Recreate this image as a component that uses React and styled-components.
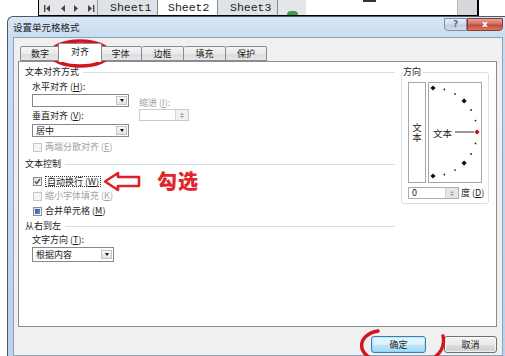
import React from 'react'
import styled, { createGlobalStyle } from 'styled-components'

const GlobalStyle = createGlobalStyle`
  html, body { margin: 0; padding: 0; background: #fff; }
  body { width: 505px; height: 356px; overflow: hidden; }
`

const Page = styled.div`
  position: relative;
  width: 505px;
  height: 356px;
  overflow: hidden;
  background: #fff;
  font-family: "Noto Sans CJK SC", "Noto Sans", sans-serif;
  font-size: 9px;
  line-height: 12px;
  color: #1b1b1b;
`

/* excel sheet bar behind the dialog */
const SheetStrip = styled.div`
  height: 16px;
  display: flex;
`
const SheetBar = styled.div`
  margin-left: 38px;
  width: 438px;
  height: 15px;
  display: flex;
  background: #e4e6e9;
  border-left: 1px solid #000;
  border-right: 2px solid #000;
  border-bottom: 1px solid #000;
`
const NavArrows = styled.div`
  width: 58px;
  display: flex;
  align-items: center;
  border-right: 1px solid #9a9a9a;
`
const SheetTab = styled.div`
  width: 60px;
  box-sizing: border-box;
  display: flex;
  align-items: center;
  padding-left: ${p => (p.$active ? 10 : 12)}px;
  font-family: "Liberation Mono", monospace;
  font-size: 11.5px;
  color: #222;
  background: ${p => (p.$active ? '#fff' : '#dfe3e8')};
  border-right: 1px solid #8a8a8a;
`
const Filler = styled.div`
  width: 28px;
  display: flex;
  align-items: flex-end;
  justify-content: center;
`
const GreenDot = styled.div`
  width: 11px;
  height: 4px;
  border-radius: 6px 6px 0 0;
  background: #3f9a45;
`
const SheetBlank = styled.div`
  flex: 1;
  background: #fff;
  display: flex;
  justify-content: space-between;
`
const Mark = styled.div`
  margin-left: 57px;
  width: 13px;
  height: 2px;
  background: #333;
`
const ScrollStub = styled.div`
  width: 19px;
  background: #d6d8db;
  border-left: 1px solid #b8b8b8;
`

/* dialog frame */
const Dialog = styled.div`
  margin-left: 7px;
  width: 498px;
  height: 340px;
  box-sizing: border-box;
  border-left: 1px solid #4f5a68;
  border-top: 1px solid #4f5a68;
  border-top-left-radius: 6px;
  background: linear-gradient(180deg, #d9e6f5 0, #cadcf0 20px, #bcd2eb 100%);
  padding: 0 2px 0 5px;
  display: flex;
  flex-direction: column;
`
const TitleRow = styled.div`
  height: 20px;
  display: flex;
  justify-content: space-between;
`
const Title = styled.div`
  font-size: 9.5px;
  line-height: 20px;
  color: #1e1e1e;
`
const CaptionButtons = styled.div`
  display: flex;
  margin-top: 1px;
  height: 13px;
`
const CapBtn = styled.div`
  width: ${p => p.$w}px;
  box-sizing: border-box;
  display: flex;
  align-items: center;
  justify-content: center;
  border: 1px solid ${p => (p.$close ? '#8c3a30' : '#7d8fa6')};
  border-radius: ${p => (p.$close ? '0 0 4px 0' : '0 0 0 4px')};
  background: ${p =>
    p.$close
      ? 'linear-gradient(180deg, #e3a59a 0, #d36e5f 45%, #c24a37 55%, #d87a62 100%)'
      : 'linear-gradient(180deg, #e8eef6 0, #d2dcea 45%, #c0cde0 55%, #d3deeb 100%)'};
  color: ${p => (p.$close ? '#fff' : '#5b6c86')};
  font-family: "DejaVu Sans", sans-serif;
  font-weight: bold;
  font-size: 9px;
  line-height: 9px;
`

const Client = styled.div`
  flex: 1;
  border: 1px solid #8ea1b8;
  background: #f0f0f0;
  padding: 6px 5px 0 4px;
  display: flex;
  flex-direction: column;
`
const TabStrip = styled.div`
  height: 18px;
  display: flex;
  align-items: flex-end;
  padding-left: 2px;
  margin-bottom: -1px;
  position: relative;
  z-index: 1;
`
const Tab = styled.div`
  width: ${p => p.$w}px;
  height: ${p => (p.$active ? 19 : 15)}px;
  box-sizing: border-box;
  margin: ${p => (p.$active ? '0 -2px' : '0 0 1px')};
  display: flex;
  align-items: center;
  justify-content: center;
  border: 1px solid #898c95;
  border-bottom: ${p => (p.$active ? 'none' : '1px solid #898c95')};
  border-left: ${p => (p.$first || p.$active ? '1px solid #898c95' : 'none')};
  border-radius: 2px 2px 0 0;
  background: ${p => (p.$active ? '#fff' : 'linear-gradient(180deg, #f3f3f3 0, #ebebeb 50%, #dcdcdc 51%, #e6e6e6 100%)')};
  position: relative;
  z-index: ${p => (p.$active ? 2 : 0)};
  padding-bottom: ${p => (p.$active ? 2 : 0)}px;
`
const Pane = styled.div`
  height: 266px;
  box-sizing: border-box;
  background: #fff;
  border: 1px solid #898c95;
  padding: 4px 7px 0 6px;
  display: flex;
  gap: 6px;
`
const LeftCol = styled.div`
  width: 370px;
  display: flex;
  flex-direction: column;
`
const GroupTitle = styled.div`
  height: 12px;
  margin-top: ${p => p.$mt || 0}px;
  display: flex;
  align-items: center;
  &::after {
    content: '';
    flex: 1;
    height: 1px;
    margin-left: 4px;
    background: #d5dfe5;
  }
`
const FieldLabel = styled.div`
  height: 12px;
  margin-top: ${p => p.$mt || 0}px;
  padding-left: ${p => (p.$indent ? 7 : 0)}px;
  color: ${p => (p.$disabled ? '#a3a3a3' : '#1b1b1b')};
  white-space: nowrap;
`
const AlignGrid = styled.div`
  margin-top: 3px;
  padding-left: 7px;
  display: flex;
  gap: 10px;
`
const Col = styled.div`
  display: flex;
  flex-direction: column;
  padding-top: ${p => p.$pt || 0}px;
`
const Select = styled.div`
  width: ${p => p.$w}px;
  height: ${p => p.$h || 13}px;
  margin-top: ${p => p.$mt || 0}px;
  margin-left: ${p => p.$ml || 0}px;
  box-sizing: border-box;
  border: 1px solid #828790;
  background: #fff;
  display: flex;
  align-items: center;
`
const SelectText = styled.span`
  flex: 1;
  padding-left: 3px;
`
const SelectBtn = styled.span`
  width: 11px;
  height: 9px;
  margin-right: 1px;
  box-sizing: border-box;
  border: 1px solid #c3c3c3;
  background: linear-gradient(180deg, #fafafa, #e2e2e2);
  display: flex;
  align-items: center;
  justify-content: center;
  &::after {
    content: '';
    border-left: 2.5px solid transparent;
    border-right: 2.5px solid transparent;
    border-top: 3px solid #111;
  }
`
const Spinner = styled.div`
  width: ${p => p.$w}px;
  height: 12px;
  flex: none;
  box-sizing: border-box;
  border: 1px solid ${p => (p.$disabled ? '#c9cbd0' : '#abadb3')};
  background: #fff;
  display: flex;
  align-items: center;
`
const SpinText = styled.span`
  flex: 1;
  padding-left: 3px;
`
const SpinBtns = styled.span`
  width: 12px;
  height: 100%;
  background: ${p => (p.$disabled ? '#f1f1f1' : '#e4e6ea')};
  border-left: 1px solid #d3d5d9;
  display: flex;
  flex-direction: column;
  align-items: center;
  justify-content: center;
  gap: 1px;
  &::before, &::after {
    content: '';
    border-left: 2px solid transparent;
    border-right: 2px solid transparent;
  }
  &::before { border-bottom: 2px solid #9aa0aa; }
  &::after { border-top: 2px solid #9aa0aa; }
`
const CheckRow = styled.div`
  position: relative;
  height: 12px;
  margin-top: ${p => p.$mt || 0}px;
  padding-left: 8px;
  display: flex;
  align-items: center;
  gap: 3px;
  color: ${p => (p.$disabled ? '#a3a3a3' : '#1b1b1b')};
  white-space: nowrap;
`
const Box = styled.span`
  width: 9px;
  height: 9px;
  box-sizing: border-box;
  flex: none;
  border: 1px solid ${p => (p.$disabled ? '#c8c8c8' : '#8e8f8f')};
  background: ${p => (p.$disabled ? '#f4f4f4' : 'linear-gradient(135deg, #dedede, #fbfbfb)')};
  display: flex;
  align-items: center;
  justify-content: center;
`
const Fill = styled.span`
  width: 5px;
  height: 5px;
  background: linear-gradient(135deg, #2a5ea8, #5c93d6);
`
const Focus = styled.span`
  border: 1px dotted #333;
  padding: 0 1px;
  line-height: 9px;
`
const Note = styled.div`
  position: absolute;
  left: 78px;
  top: -5px;
  display: flex;
  align-items: center;
  gap: 16px;
`
const NoteText = styled.span`
  font-size: 20px;
  line-height: 22px;
  font-weight: 900;
  color: #e0262c;
  letter-spacing: 1px;
`

/* 方向 */
const Fieldset = styled.fieldset`
  margin: 0;
  width: 88px;
  height: 138px;
  box-sizing: border-box;
  padding: 4px 0 0 6px;
  border: 1px solid #d5dfe5;
  border-radius: 3px;
  min-width: 0;
`
const Legend = styled.legend`
  padding: 0 2px 0 0;
  margin-left: -5px;
  line-height: 12px;
`
const DialRow = styled.div`
  display: flex;
  gap: 2px;
`
const VerticalBox = styled.div`
  width: 18px;
  height: 101px;
  box-sizing: border-box;
  border: 1px solid #a7a7a7;
  display: flex;
  align-items: center;
  justify-content: center;
`
const VText = styled.span`
  writing-mode: vertical-rl;
  font-size: 9.5px;
  line-height: 10px;
`
const DialBox = styled.div`
  position: relative;
  width: 54px;
  height: 101px;
  box-sizing: border-box;
  border: 1px solid #a7a7a7;
  display: flex;
  align-items: center;
  padding-left: 4px;
  font-size: 9.5px;
`
const DialSvg = styled.svg`
  position: absolute;
  left: 0;
  top: 0;
`
const DialLabel = styled.span`
  position: relative;
`
const DegreeRow = styled.div`
  margin-top: 4px;
  display: flex;
  align-items: center;
  gap: 2px;
  white-space: nowrap;
`

const Footer = styled.div`
  margin-top: 9px;
  display: flex;
  justify-content: flex-end;
  gap: 18px;
`
const Button = styled.div`
  width: ${p => p.$w}px;
  height: 17px;
  box-sizing: border-box;
  border: 1px solid ${p => (p.$default ? '#3c7fb1' : '#707070')};
  border-radius: 3px;
  background: ${p =>
    p.$default
      ? 'linear-gradient(180deg, #eaf6fd 0, #d9f0fc 50%, #bee6fd 51%, #a7d9f5 100%)'
      : 'linear-gradient(180deg, #f2f2f2 0, #ebebeb 50%, #dddddd 51%, #cfcfcf 100%)'};
  box-shadow: inset 0 0 0 1px ${p => (p.$default ? '#48d6fb55' : '#ffffffaa')};
  display: flex;
  align-items: center;
  justify-content: center;
`

const Markup = styled.svg`
  position: absolute;
  left: 0;
  top: 0;
  pointer-events: none;
`

const tabs = [
  { label: '数字', w: 40 },
  { label: '对齐', w: 44, active: true },
  { label: '字体', w: 42 },
  { label: '边框', w: 42 },
  { label: '填充', w: 42 },
  { label: '保护', w: 41 },
]

function Dial() {
  const cx = 4, cy = 49, r = 44
  const marks = []
  for (let a = 90; a >= -90; a -= 15) {
    const rad = (a * Math.PI) / 180
    const x = cx + r * Math.cos(rad)
    const y = cy - r * Math.sin(rad)
    if (a % 45 === 0) {
      const s = 2.6
      marks.push(
        <polygon key={a} points={`${x},${y - s} ${x + s},${y} ${x},${y + s} ${x - s},${y}`} fill={a === 0 ? '#b3121b' : '#111'} />
      )
    } else {
      marks.push(<circle key={a} cx={x} cy={y} r={0.9} fill="#222" />)
    }
  }
  return (
    <DialSvg width="52" height="99" viewBox="0 0 52 99">
      <line x1="26" y1={cy} x2="45" y2={cy} stroke="#333" strokeWidth="1" />
      {marks}
    </DialSvg>
  )
}

export default function App() {
  return (
    <Page>
      <GlobalStyle />
      <SheetStrip>
        <SheetBar>
          <NavArrows>
            <svg width="58" height="14" viewBox="0 0 58 14">
              <rect x="5" y="4" width="1.4" height="7" fill="#444" />
              <polygon points="11,4 7,7.5 11,11" fill="#444" />
              <polygon points="26,4 22,7.5 26,11" fill="#444" />
              <polygon points="35,4 39,7.5 35,11" fill="#444" />
              <polygon points="49,4 53,7.5 49,11" fill="#444" />
              <rect x="54" y="4" width="1.4" height="7" fill="#444" />
            </svg>
          </NavArrows>
          <SheetTab>Sheet1</SheetTab>
          <SheetTab $active>Sheet2</SheetTab>
          <SheetTab>Sheet3</SheetTab>
          <Filler>
            <GreenDot />
          </Filler>
          <SheetBlank>
            <Mark />
            <ScrollStub />
          </SheetBlank>
        </SheetBar>
      </SheetStrip>

      <Dialog>
        <TitleRow>
          <Title>设置单元格格式</Title>
          <CaptionButtons>
            <CapBtn $w={23}>?</CapBtn>
            <CapBtn $w={36} $close>x</CapBtn>
          </CaptionButtons>
        </TitleRow>
        <Client>
          <TabStrip>
            {tabs.map((t, i) => (
              <Tab key={t.label} $w={t.w} $active={t.active} $first={i === 0}>
                {t.label}
              </Tab>
            ))}
          </TabStrip>
          <Pane>
            <LeftCol>
              <GroupTitle>文本对齐方式</GroupTitle>
              <AlignGrid>
                <Col>
                  <FieldLabel>水平对齐 (<u>H</u>):</FieldLabel>
                  <Select $w={97} $mt={1}>
                    <SelectText />
                    <SelectBtn />
                  </Select>
                  <FieldLabel $mt={3}>垂直对齐 (<u>V</u>):</FieldLabel>
                  <Select $w={97} $mt={2}>
                    <SelectText>居中</SelectText>
                    <SelectBtn />
                  </Select>
                </Col>
                <Col $pt={16}>
                  <FieldLabel $disabled>缩进 (<u>I</u>):</FieldLabel>
                  <Spinner $w={50} $disabled>
                    <SpinText />
                    <SpinBtns $disabled />
                  </Spinner>
                </Col>
              </AlignGrid>
              <CheckRow $mt={4} $disabled>
                <Box $disabled />
                <span>两端分散对齐 (<u>E</u>)</span>
              </CheckRow>

              <GroupTitle $mt={5}>文本控制</GroupTitle>
              <CheckRow $mt={5}>
                <Box>
                  <svg width="7" height="7" viewBox="0 0 7 7">
                    <path d="M1 3.6 L2.8 5.4 L6 1.2" fill="none" stroke="#3b4a66" strokeWidth="1.4" />
                  </svg>
                </Box>
                <Focus>自动换行 (<u>W</u>)</Focus>
                <Note>
                  <svg width="38" height="21" viewBox="0 0 38 21">
                    <path d="M2 10.5 L15 2 L15 6 L36 6 L36 15 L15 15 L15 19 Z" fill="#fff" stroke="#dd2229" strokeWidth="2.6" strokeLinejoin="round" />
                  </svg>
                  <NoteText>勾选</NoteText>
                </Note>
              </CheckRow>
              <CheckRow $mt={3} $disabled>
                <Box $disabled />
                <span>缩小字体填充 (<u>K</u>)</span>
              </CheckRow>
              <CheckRow $mt={3}>
                <Box>
                  <Fill />
                </Box>
                <span>合并单元格 (<u>M</u>)</span>
              </CheckRow>

              <GroupTitle $mt={3}>从右到左</GroupTitle>
              <FieldLabel $mt={2} $indent>文字方向 (<u>T</u>):</FieldLabel>
              <Select $w={82} $h={15} $mt={1} $ml={7}>
                <SelectText>根据内容</SelectText>
                <SelectBtn />
              </Select>
            </LeftCol>

            <Fieldset>
              <Legend>方向</Legend>
              <DialRow>
                <VerticalBox>
                  <VText>文本</VText>
                </VerticalBox>
                <DialBox>
                  <Dial />
                  <DialLabel>文本</DialLabel>
                </DialBox>
              </DialRow>
              <DegreeRow>
                <Spinner $w={51}>
                  <SpinText>0</SpinText>
                  <SpinBtns />
                </Spinner>
                <span>度 (<u>D</u>)</span>
              </DegreeRow>
            </Fieldset>
          </Pane>
          <Footer>
            <Button $w={55} $default>确定</Button>
            <Button $w={53}>取消</Button>
          </Footer>
        </Client>
      </Dialog>

      <Markup width="505" height="356" viewBox="0 0 505 356">
        <ellipse cx="80" cy="53.5" rx="29.5" ry="12.5" fill="none" stroke="#d4151c" strokeWidth="3.4" />
        <path d="M378 331 C358 334, 352 356, 385 364 C415 370, 448 360, 443 336" fill="none" stroke="#d4151c" strokeWidth="3.4" strokeLinecap="round" />
      </Markup>
    </Page>
  )
}
